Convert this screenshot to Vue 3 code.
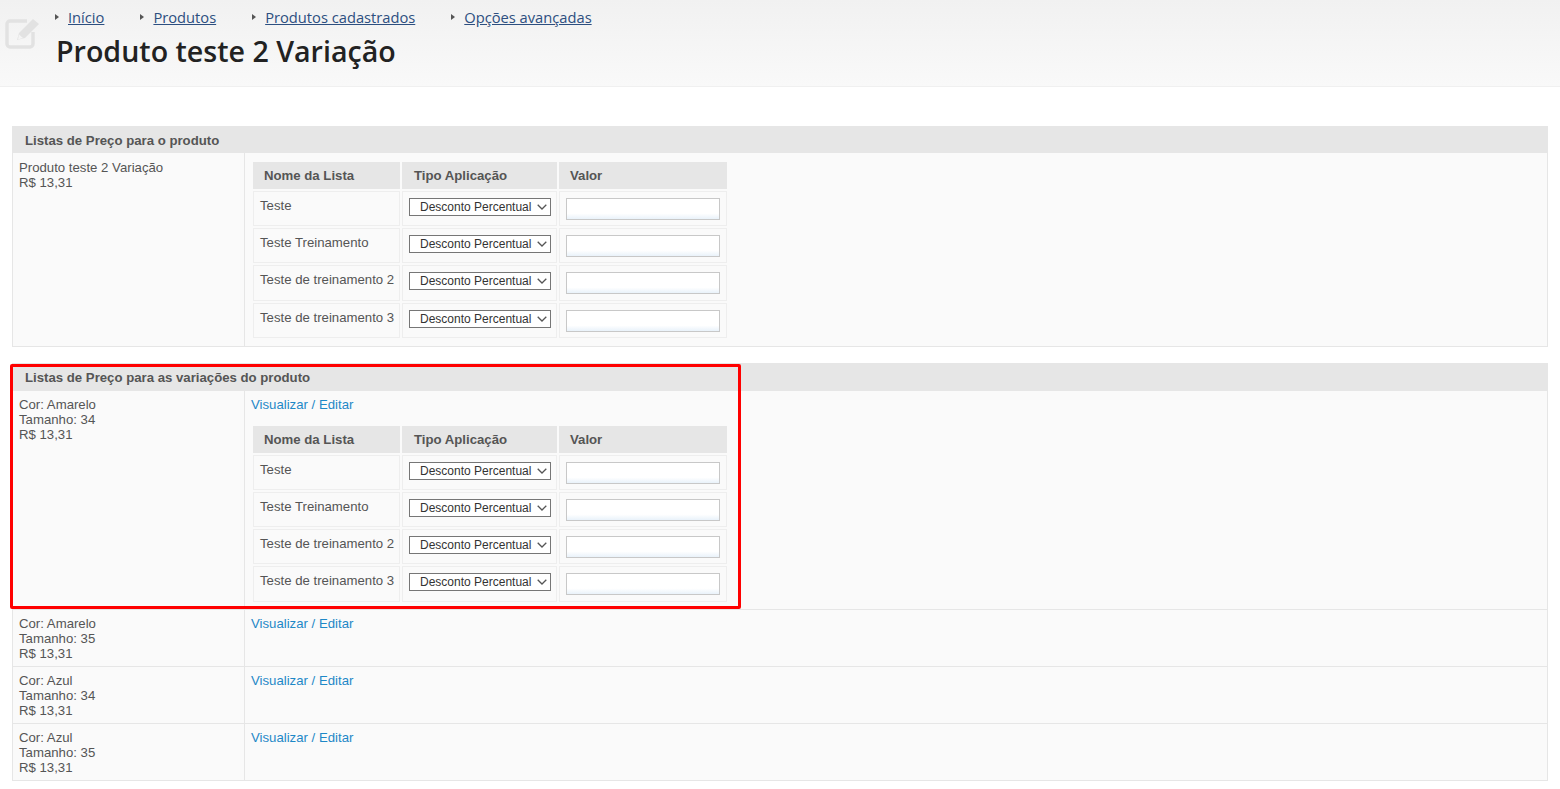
<script setup>
const crumbs = ['Início', 'Produtos', 'Produtos cadastrados', 'Opções avançadas']
const lists = ['Teste', 'Teste Treinamento', 'Teste de treinamento 2', 'Teste de treinamento 3']
const others = [
  ['Cor: Amarelo', 'Tamanho: 35'],
  ['Cor: Azul', 'Tamanho: 34'],
  ['Cor: Azul', 'Tamanho: 35'],
]
</script>

<template>
  <div class="page">
    <header class="top">
      <svg class="note" width="36" height="34" viewBox="0 0 36 34" aria-hidden="true">
        <path d="M22 5H5a3 3 0 0 0-3 3v20a3 3 0 0 0 3 3h20a3 3 0 0 0 3-3V16" fill="none" stroke="#e2e2e2" stroke-width="3.4"/>
        <path d="M12 24l2-7L28 3l6 5-14 14z" fill="#e2e2e2"/>
        <path d="M14 18.5l4 3.5-5 1.6z" fill="#f4f4f4"/>
      </svg>
      <div class="heading">
        <nav class="crumbs">
          <span v-for="c in crumbs" :key="c" class="crumb"><i class="tri"></i><a href="#">{{ c }}</a></span>
        </nav>
        <h1>Produto teste 2 Variação</h1>
      </div>
    </header>

    <main class="content">
      <section class="panel first">
        <h2>Listas de Preço para o produto</h2>
        <div class="row">
          <div class="info">Produto teste 2 Variação<br>R$ 13,31</div>
          <div class="detail">
            <table class="prices">
              <thead><tr><th class="c1">Nome da Lista</th><th class="c2">Tipo Aplicação</th><th class="c3">Valor</th></tr></thead>
              <tbody>
                <tr v-for="l in lists" :key="l">
                  <td class="name">{{ l }}</td>
                  <td><select><option>Desconto Percentual</option></select></td>
                  <td><input type="text"></td>
                </tr>
              </tbody>
            </table>
          </div>
        </div>
      </section>

      <section class="panel second">
        <h2>Listas de Preço para as variações do produto</h2>
        <div class="row">
          <div class="info">Cor: Amarelo<br>Tamanho: 34<br>R$ 13,31</div>
          <div class="detail">
            <a class="edit" href="#">Visualizar / Editar</a>
            <table class="prices open">
              <thead><tr><th class="c1">Nome da Lista</th><th class="c2">Tipo Aplicação</th><th class="c3">Valor</th></tr></thead>
              <tbody>
                <tr v-for="l in lists" :key="l">
                  <td class="name">{{ l }}</td>
                  <td><select><option>Desconto Percentual</option></select></td>
                  <td><input type="text"></td>
                </tr>
              </tbody>
            </table>
          </div>
        </div>
        <div v-for="(o, i) in others" :key="i" class="row short">
          <div class="info">{{ o[0] }}<br>{{ o[1] }}<br>R$ 13,31</div>
          <div class="detail"><a class="edit" href="#">Visualizar / Editar</a></div>
        </div>
        <div class="mark"></div>
      </section>
    </main>
  </div>
</template>

<style>
html, body { margin: 0; background: #fff; }
</style>

<style scoped>
.page { font-family: "Liberation Sans", Arial, sans-serif; color: #555; font-size: 13.2px; }
.top {
  height: 86px; box-sizing: content-box; display: flex;
  background: linear-gradient(#f1f1f1, #f9f9f9); border-bottom: 1px solid #f0f0f0;
}
.note { margin: 16px 0 0 5px; flex: none; }
.heading { margin-left: 15px; }
.crumbs { display: flex; padding-top: 8px; height: 18px; font: 14.7px/18px "Open Sans", "Noto Sans", sans-serif; }
.crumb { display: flex; align-items: center; margin-left: -1px; }
.crumb + .crumb { margin-left: 36px; }
.tri { width: 0; height: 0; border-left: 4px solid #555; border-top: 3.5px solid transparent; border-bottom: 3.5px solid transparent; margin-right: 9px; }
.crumbs a { color: #2d4f80; }
h1 { margin: 6px 0 0; font: 600 28.6px/38px "Open Sans", "Noto Sans", sans-serif; color: #222; }
.content { padding: 39px 12px 0; }
.panel { position: relative; background: #fafafa; }
.second { margin-top: 16px; }
h2 {
  margin: 0; height: 28px; padding-left: 13px; background: #e6e6e6;
  font: bold 13.2px/29px "Liberation Sans", Arial, sans-serif; color: #555;
}
.first h2 { height: 27px; }
.row { display: flex; border: 1px solid #e6e6e6; border-top: 0; }
.info { width: 232px; flex: none; box-sizing: border-box; padding: 7px 6px; border-right: 1px solid #e6e6e6; line-height: 15px; }
.second .info { padding-top: 6px; }
.detail { padding: 6px 6px 6.1px; }
.second .detail { padding-bottom: 5.75px; }
.short { height: 56px; box-sizing: content-box; }
.edit { color: #1e88c7; text-decoration: none; line-height: 15px; display: block; }
.prices { border-collapse: separate; border-spacing: 2px; margin: .9px 0 0 0; table-layout: fixed; width: 478px; }
.prices.open { margin-top: 11.55px; }
.c1 { width: 147px; } .c2 { width: 155px; padding-left: 12px; } .c3 { width: 168px; }
th {
  height: 27px; padding: 0 0 0 11px; box-sizing: border-box; background: #e6e6e6; text-align: left;
  font: bold 13.2px/27px "Liberation Sans", Arial, sans-serif; color: #555;
}
td { height: 35.25px; box-sizing: border-box; padding: 6px 6px 5.25px; border: 1px solid #eee; vertical-align: top; }
.name { white-space: nowrap; line-height: 15px; }
select {
  display: block; width: 142px; height: 18px; box-sizing: border-box; padding: 0 0 0 10px; margin-top: 0;
  appearance: none; border: 1px solid #767676; border-radius: 0; color: #333;
  background: #fff url("data:image/svg+xml,%3Csvg xmlns='http://www.w3.org/2000/svg' width='10' height='6' viewBox='0 0 10 6'%3E%3Cpath d='M.7.8 5 5l4.3-4.2' fill='none' stroke='%23555' stroke-width='1.3'/%3E%3C/svg%3E") no-repeat right 3px center;
  font: 12px "Liberation Sans", Arial, sans-serif;
}
input {
  display: block; width: 154px; height: 22px; box-sizing: border-box; padding: 0; margin-left: 0;
  border: 1px solid #c8c8c8; background: linear-gradient(#fff 72%, #e9f2fa); background-clip: padding-box;
}
.mark {
  position: absolute; left: -2px; top: 1px; width: 731px; height: 245px; box-sizing: border-box;
  border: 3px solid #f00; border-radius: 2px; pointer-events: none;
}
</style>
